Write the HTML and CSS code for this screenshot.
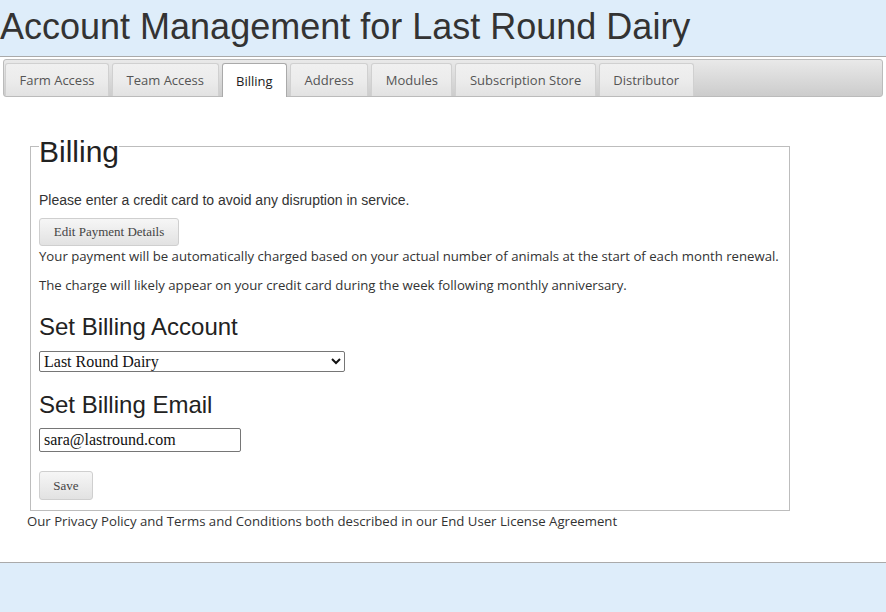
FILE: index.html
```html
<!DOCTYPE html>
<html>
<head>
<meta charset="utf-8">
<title>Account Management</title>
<link rel="stylesheet" href="styles.css">
</head>
<body>
<h1 class="page-title">Account Management for Last Round Dairy</h1>
<div class="panel">
  <ul class="tabbar">
    <li class="tab">Farm Access</li>
    <li class="tab">Team Access</li>
    <li class="tab active">Billing</li>
    <li class="tab">Address</li>
    <li class="tab">Modules</li>
    <li class="tab">Subscription Store</li>
    <li class="tab">Distributor</li>
  </ul>
  <fieldset class="billing">
    <legend class="legend">Billing</legend>
    <p class="intro">Please enter a credit card to avoid any disruption in service.</p>
    <button class="btn btn-edit" type="button">Edit Payment Details</button>
    <p class="note first">Your payment will be automatically charged based on your actual number of animals at the start of each month renewal.</p>
    <p class="note second">The charge will likely appear on your credit card during the week following monthly anniversary.</p>
    <h2 class="section">Set Billing Account</h2>
    <select class="account">
      <option>Last Round Dairy</option>
    </select>
    <h2 class="section">Set Billing Email</h2>
    <input class="email" type="text" value="sara@lastround.com">
    <button class="btn btn-save" type="button">Save</button>
  </fieldset>
  <p class="footer">Our Privacy Policy and Terms and Conditions both described in our End User License Agreement</p>
</div>
</body>
</html>
```

FILE: styles.css
```css
html, body {
  margin: 0;
  padding: 0;
  background: #deedfa;
  font-family: "Liberation Sans", Arial, sans-serif;
  color: #333;
}

.page-title {
  margin: 0;
  height: 56px;
  font-weight: normal;
  font-size: 36px;
  line-height: 54px;
  color: #333;
  white-space: nowrap;
}

.panel {
  background: #fff;
  border-top: 1px solid #aaa;
  border-bottom: 1px solid #aaa;
  padding: 2px 3px 32px 3px;
}

.tabbar {
  list-style: none;
  margin: 0;
  padding: 3px 0 0 1px;
  height: 33px;
  display: flex;
  gap: 3px;
  border: 1px solid #bbb;
  border-radius: 3px;
  background: linear-gradient(#e9e9e9, #cccccc);
}

.tab {
  box-sizing: border-box;
  height: 33px;
  padding: 0 13.5px;
  display: flex;
  align-items: center;
  font-family: "Open Sans", sans-serif;
  font-size: 13px;
  color: #555;
  background: linear-gradient(#f0f0f0 0%, #ececec 50%, #e2e2e2 100%);
  border: 1px solid #d0d0d0;
  border-bottom: none;
  border-radius: 3px 3px 0 0;
}

.tab.active {
  background: #fff;
  color: #212121;
  border-color: #aaa;
  height: 34px;
  margin-bottom: -1px;
  position: relative;
}

.billing {
  margin: 26px 0 0 27px;
  width: 760px;
  box-sizing: border-box;
  border: 1px solid #bdbdbd;
  padding: 0 8px 10px 8px;
  display: flex;
  flex-direction: column;
  align-items: flex-start;
}

.legend {
  padding: 12px 0 0 0;
  font-size: 30px;
  line-height: 34px;
  color: #222;
}

.intro {
  margin: 23px 0 0 0;
  font-size: 14px;
  line-height: 16px;
  color: #333;
}

.btn {
  font-family: "Liberation Serif", "Times New Roman", serif;
  font-size: 13px;
  color: #444;
  background: linear-gradient(#f6f6f6, #e2e2e2);
  border: 1px solid #cfcfcf;
  border-radius: 3px;
  padding: 0 13px;
  margin: 0;
}

.btn-edit {
  margin-top: 10px;
  height: 28px;
  width: 140px;
  padding: 0;
}

.note {
  margin: 0;
  font-family: "Open Sans", sans-serif;
  font-size: 13.2px;
  line-height: 20px;
  color: #333;
}

.note.second {
  margin-top: 9px;
}

.section {
  margin: 19px 0 0 0;
  font-weight: normal;
  font-size: 24px;
  line-height: 26px;
  color: #222;
}

.account {
  margin-top: 11px;
  width: 306px;
  height: 21px;
  font-family: "Liberation Serif", "Times New Roman", serif;
  font-size: 16px;
  color: #111;
  border: 1px solid #767676;
  border-radius: 2px;
  background: #fff;
  padding: 0;
}

.account + .section {
  margin-top: 20px;
}

.email {
  margin-top: 10px;
  width: 202px;
  height: 24px;
  box-sizing: border-box;
  font-family: "Liberation Serif", "Times New Roman", serif;
  font-size: 16px;
  color: #111;
  border: 1px solid #767676;
  border-radius: 2px;
  padding: 0 4px;
}

.btn-save {
  margin-top: 19px;
  height: 29px;
  width: 54px;
  padding: 0;
}

.footer {
  margin: 1px 0 0 24px;
  font-family: "Open Sans", sans-serif;
  font-size: 13.2px;
  line-height: 18px;
  color: #333;
}
```
